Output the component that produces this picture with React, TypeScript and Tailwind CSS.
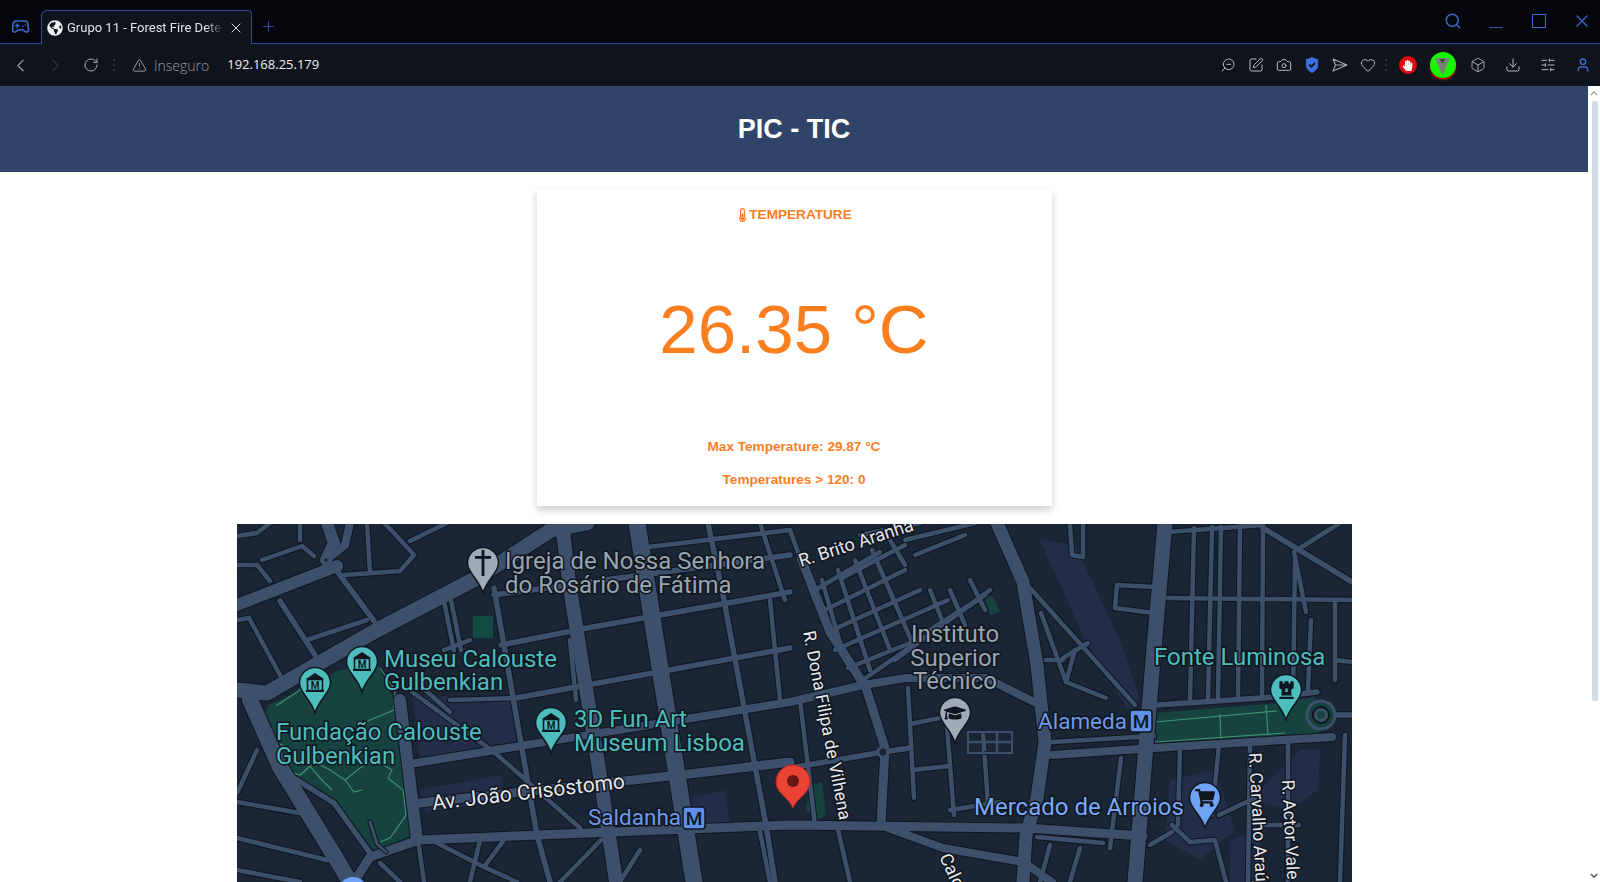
import {
  Box,
  Camera,
  ChevronLeft,
  ChevronRight,
  Download,
  Gamepad2,
  Heart,
  Plus,
  RotateCw,
  Search,
  SlidersHorizontal,
  SquarePen,
  TriangleAlert,
  User,
  X,
  ZoomOut,
} from "lucide-react";
import {
  FaChessRook,
  FaGlobeAmericas,
  FaGraduationCap,
  FaHandPaper,
  FaShoppingCart,
  FaThermometerHalf,
} from "react-icons/fa";

// [width, points] in page coordinates, the map svg has a matching viewBox
const ROADS: [number, string][] = [
  [3, "237,565 257,565"],
  [3, "257,565 270,581"],
  [3, "262,560 302,546 314,556"],
  [3, "367,523 370,573"],
  [3, "344,575 400,571 414,555 394,533 384,523"],
  [3, "410,541 447,523"],
  [3, "237,536 257,533 270,523"],
  [3, "444,601 454,651"],
  [3, "451,600 461,650"],
  [3, "249,618 280,675"],
  [3, "307,640 367,620"],
  [3, "237,620 249,618"],
  [3, "300,523 300,540"],
  [4, "337,571 374,621"],
  [4, "280,601 315,655"],
  [3, "237,802 300,813"],
  [3, "237,838 327,860"],
  [3, "237,793 257,750"],
  [3, "237,870 300,882"],
  [4, "294,778 334,803 370,853"],
  [3, "380,863 400,882"],
  [3, "419,847 424,882"],
  [3, "437,843 484,867 517,882"],
  [3, "504,840 484,867"],
  [3, "412,692 494,752 580,828"],
  [3, "425,690 450,712"],
  [4, "494,588 537,835 550,882"],
  [4, "708,523 723,595 766,825 775,882"],
  [3, "444,650 470,640"],
  [3, "570,640 576,700"],
  [3, "650,620 660,700"],
  [4, "494,595 790,555"],
  [3, "640,548 790,530"],
  [4, "501,645 587,628 790,592"],
  [4, "516,698 790,648"],
  [3, "450,700 516,698"],
  [5, "416,763 790,702"],
  [6, "420,803 698,773 790,762"],
  [3, "760,523 785,600"],
  [3, "690,830 700,882"],
  [3, "760,832 770,882"],
  [3, "800,700 815,825"],
  [3, "601,840 560,882"],
  [3, "640,850 620,882"],
  [3, "480,840 470,882"],
  [3, "770,600 780,700"],
  // R. Brito Aranha grid
  [3, "815,590 880,552"],
  [3, "825,610 905,570"],
  [3, "828,632 920,590"],
  [3, "835,650 948,600"],
  [3, "848,668 930,635"],
  [3, "860,682 985,595"],
  [3, "895,660 990,590"],
  [3, "842,578 905,545"],
  [3, "822,580 845,660"],
  [3, "838,570 870,670"],
  [3, "855,560 890,650"],
  [3, "872,550 912,642"],
  [3, "890,540 905,565"],
  [3, "930,590 946,630"],
  [3, "950,590 965,625"],
  [3, "970,580 985,610"],
  [3, "860,535 920,523"],
  [3, "905,540 975,523"],
  [3, "915,555 965,535"],
  [3, "790,530 815,600"],
  // Instituto area
  [4, "790,768 883,752 910,748"],
  [3, "908,688 914,798"],
  [3, "946,715 954,815"],
  [3, "983,732 988,805"],
  [3, "910,724 950,716"],
  [3, "912,770 950,766"],
  [3, "950,810 1000,802"],
  [3, "930,630 985,595"],
  [6, "801,558 830,632 866,688 885,748 881,825"],
  [5, "790,702 863,685 906,678 986,678 1034,702"],
  [3, "1070,525 1072,555 1083,557 1083,525"],
  [3, "1154,587 1117,585 1115,608 1154,613"],
  [3, "1030,588 1135,705"],
  [3, "1041,613 1066,682 1106,698"],
  [3, "1063,658 1088,643"],
  [3, "1046,660 1063,660"],
  [3, "1066,682 1075,650"],
  [3, "837,825 850,882"],
  [5, "888,828 943,848 1023,862 1052,882"],
  [3, "1037,837 1103,843"],
  [3, "1050,845 1040,882"],
  [3, "1080,848 1070,882"],
  [3, "1110,848 1121,758"],
  [3, "1052,742 1154,736"],
  [3, "1172,825 1190,842 1215,840 1226,882"],
  [3, "1150,845 1172,832"],
  [3, "1219,815 1255,798"],
  [3, "1263,825 1299,825"],
  [3, "1180,745 1178,825"],
  [3, "1219,745 1212,815"],
  [3, "1250,745 1248,882"],
  [3, "1288,740 1288,882"],
  [3, "1345,735 1340,882"],
  // blocks above the Alameda park
  [3, "1194,528 1190,700"],
  [3, "1212,527 1208,698"],
  [3, "1221,527 1218,698"],
  [3, "1240,526 1238,697"],
  [3, "1263,525 1262,696"],
  [3, "1295,560 1293,694"],
  [3, "1311,620 1308,690"],
  [3, "1335,600 1335,680"],
  [3, "1168,598 1352,600"],
  [3, "1168,532 1263,525"],
  [4, "1263,528 1352,582"],
  [3, "1294,552 1306,612"],
  [3, "1300,548 1340,523"],
  [3, "1335,660 1352,662"],
  [4, "1157,705 1274,697 1317,692"],
  [5, "1052,755 1154,748 1332,737"],
  [4, "1332,715 1352,715"],
  // main avenues
  [9, "326,560 334,543 327,523"],
  [5, "326,560 345,545 350,523"],
  [9, "237,605 337,566"],
  [9, "400,700 417,840"],
  [6, "354,882 370,857 419,840 537,835 790,825 1026,828 1143,836"],
  [12, "237,690 267,693 377,630 477,578 551,530 587,523"],
  [13, "250,700 280,767 337,860 350,882"],
  [11, "562,523 569,582 601,782 616,882"],
  [14, "637,523 694,882"],
  [10, "997,523 1023,582 1037,665 1045,742 1037,798 1026,835 1023,882"],
  [12, "1165,523 1154,648 1143,782 1135,882"],
];

const PARK_PATHS = [
  "264,738 282,745 291,752 283,770 300,775 310,766 320,778 332,790",
  "300,775 315,762 330,770 345,780 360,768 375,760 392,770 388,778 403,790 406,815 390,838 380,842",
  "345,780 354,792 362,790",
  "276,706 300,690 302,678 325,664",
  "380,668 395,690 394,710 370,720 360,725",
  "1155,722 1277,711",
  "1155,742 1285,733",
  "1220,714 1221,742",
  "1266,705 1268,735",
  "1055,752 1155,744",
];

// thin streets and avenues both read heavier than their traced centre lines
function roadWidth(width: number) {
  return width <= 4 ? width + 1.5 : width + 3;
}

function Road({ width, points, casing }: { width: number; points: string; casing?: boolean }) {
  return (
    <polyline
      points={points}
      fill="none"
      stroke={casing ? "#10161f" : "#3d506b"}
      strokeWidth={casing ? roadWidth(width) + 2 : roadWidth(width)}
      strokeLinecap="round"
      strokeLinejoin="round"
    />
  );
}

function Pin({ x, y, color, children }: { x: number; y: number; color: string; children?: React.ReactNode }) {
  return (
    <g transform={`translate(${x} ${y})`}>
      <path
        d="M-15.5 0A15.5 15.5 0 1 1 15.5 0C15.5 10 4 16 0 30C-4 16 -15.5 10 -15.5 0Z"
        fill={color}
        stroke="#10161f"
        strokeWidth="1.5"
      />
      {children}
    </g>
  );
}

function Museum() {
  return (
    <g>
      <polygon points="-9,-4 0,-10 9,-4" fill="#10161f" />
      <rect x="-7.5" y="-3.5" width="15" height="11" fill="none" stroke="#10161f" strokeWidth="1.6" />
      <rect x="-9" y="7" width="18" height="2" fill="#10161f" />
      <text x="0" y="5.5" textAnchor="middle" fontSize="10" fontWeight="700" fontFamily="Roboto, sans-serif" fill="#10161f">
        M
      </text>
    </g>
  );
}

function MetroBadge({ x, y }: { x: number; y: number }) {
  return (
    <g>
      <rect x={x} y={y} width="22" height="22" rx="3" fill="#5f8fe8" stroke="#10161f" strokeWidth="1.5" />
      <text x={x + 11} y={y + 18} textAnchor="middle" fontSize="19" fontWeight="500" fill="#10161f">
        M
      </text>
    </g>
  );
}

function Label({
  x,
  y,
  color,
  size = 24,
  anchor,
  rotate,
  children,
}: {
  x: number;
  y: number;
  color: string;
  size?: number;
  anchor?: "middle";
  rotate?: number;
  children: React.ReactNode;
}) {
  return (
    <text
      x={x}
      y={y}
      fill={color}
      fontSize={size}
      textAnchor={anchor}
      stroke="#10161f"
      strokeWidth="3"
      paintOrder="stroke"
      transform={rotate ? `rotate(${rotate} ${x} ${y})` : undefined}
    >
      {children}
    </text>
  );
}

function MapView() {
  const teal = "#4dbdbd";
  const grey = "#98a5b0";
  const blue = "#6f9bea";
  return (
    <svg viewBox="237 524 1115 359" className="block h-full w-full" fontFamily="Roboto, sans-serif">
      <rect x="237" y="523" width="1115" height="360" fill="#1a2536" />

      {/* built-up zones, slightly lighter than the blocks */}
      <g fill="#222d47">
        <polygon points="412,695 520,700 517,745 420,762" />
        <polygon points="1040,540 1075,545 1120,640 1140,700 1130,712 1085,640" />
        <polygon points="420,790 500,775 505,800 425,812" />
        <polygon points="680,800 725,790 730,825 690,828" />
        <polygon points="1170,780 1215,770 1235,830 1200,860 1165,840" />
        <polygon points="1250,800 1300,750 1320,750 1318,790 1290,810" />
        <polygon points="1230,840 1260,830 1265,882 1230,882" />
      </g>

      {/* parks */}
      <g fill="#16423f">
        <polygon points="262,720 269,705 280,700 337,671 377,663 394,700 412,835 375,852 334,800 295,777" />
        <polygon points="1155,713 1277,703 1314,697 1332,715 1317,735 1155,745" />
        <rect x="473" y="616" width="20" height="22" fill="#134a42" />
        <polygon points="983,590 995,600 1000,612 990,615" />
        <polygon points="810,786 822,782 826,815 815,822 806,808" />
      </g>
      <g fill="none" stroke="#3f8f70" strokeWidth="1.2">
        {PARK_PATHS.map((p) => (
          <polyline key={p} points={p} />
        ))}
      </g>

      {/* roads, the dark casing goes under all of the fills */}
      {ROADS.map(([w, p]) => (
        <Road key={`c${p}`} width={w} points={p} casing />
      ))}
      {ROADS.map(([w, p]) => (
        <Road key={p} width={w} points={p} />
      ))}

      <polyline points="370,822 377,844 386,852" fill="none" stroke="#10161f" strokeWidth="5" strokeLinecap="round" />
      <polyline points="370,822 377,844 386,852" fill="none" stroke="#3d506b" strokeWidth="3" strokeLinecap="round" />
      <circle cx="883" cy="752" r="5" fill="#1a2536" stroke="#3d506b" strokeWidth="3" />
      <circle cx="326" cy="560" r="1.5" fill="#10161f" />
      <circle cx="1321" cy="715" r="14" fill="#16423f" stroke="#3d506b" strokeWidth="3" />
      <circle cx="1321" cy="715" r="8" fill="#3d506b" stroke="#10161f" strokeWidth="2" />
      <circle cx="1321" cy="715" r="4" fill="#16423f" />
      <g fill="none" stroke="#3d506b" strokeWidth="2.5">
        <rect x="968" y="732" width="44" height="21" stroke="#10161f" strokeWidth="4" />
        <rect x="968" y="732" width="44" height="21" />
        <path d="M968 742H1012M983 732V753M997 732V753" />
      </g>

      <Label x={505} y={569} color={grey}>Igreja de Nossa Senhora</Label>
      <Label x={505} y={593} color={grey}>do Rosário de Fátima</Label>
      <Label x={384} y={667} color={teal}>Museu Calouste</Label>
      <Label x={384} y={690} color={teal}>Gulbenkian</Label>
      <Label x={276} y={740} color={teal}>Fundação Calouste</Label>
      <Label x={276} y={764} color={teal}>Gulbenkian</Label>
      <Label x={574} y={727} color={teal}>3D Fun Art</Label>
      <Label x={574} y={751} color={teal}>Museum Lisboa</Label>
      <Label x={433} y={810} color="#e6e8ec" size={21} rotate={-6.5}>Av. João Crisóstomo</Label>
      <Label x={588} y={825} color={blue} size={22.5}>Saldanha</Label>
      <Label x={801} y={567} color="#e6e8ec" size={18} rotate={-18}>R. Brito Aranha</Label>
      <Label x={803} y={632} color="#e6e8ec" size={17.5} rotate={79}>R. Dona Filipa de Vilhena</Label>
      <Label x={955} y={642} color={grey} anchor="middle">Instituto</Label>
      <Label x={955} y={666} color={grey} anchor="middle">Superior</Label>
      <Label x={955} y={689} color={grey} anchor="middle">Técnico</Label>
      <Label x={1038} y={729} color={blue} size={22.5}>Alameda</Label>
      <Label x={1154} y={665} color={teal}>Fonte Luminosa</Label>
      <Label x={974} y={815} color="#7aa9f7">Mercado de Arroios</Label>
      <Label x={939} y={857} color="#e6e8ec" size={18} rotate={65}>Calçada</Label>
      <Label x={1249} y={753} color="#e6e8ec" size={17.5} rotate={87}>R. Carvalho Araújo</Label>
      <Label x={1282} y={780} color="#e6e8ec" size={17.5} rotate={87}>R. Actor Vale</Label>

      <MetroBadge x={683} y={807} />
      <MetroBadge x={1130} y={710} />

      <Pin x={483} y={563} color="#9fabb5">
        <rect x="-1.4" y="-13" width="2.8" height="26" fill="#10161f" />
        <rect x="-8" y="-7" width="16" height="2.8" fill="#10161f" />
      </Pin>
      <Pin x={362} y={662} color={teal}>
        <Museum />
      </Pin>
      <Pin x={315} y={683} color={teal}>
        <Museum />
      </Pin>
      <Pin x={551} y={723} color={teal}>
        <Museum />
      </Pin>
      <Pin x={955} y={713} color="#9fabb5">
        <FaGraduationCap x={-11} y={-11} size={22} color="#10161f" />
      </Pin>
      <Pin x={1205} y={798} color="#6ea2f5">
        <FaShoppingCart x={-10} y={-10} size={20} color="#10161f" />
      </Pin>
      <Pin x={1286} y={690} color={teal}>
        <FaChessRook x={-9} y={-10} size={19} color="#10161f" />
      </Pin>
      <g transform="translate(793 783)">
        <path
          d="M-17 0A17 17 0 1 1 17 0C17 11 4 16 0 26C-4 16 -17 11 -17 0Z"
          transform="translate(0 -1)"
          fill="#ea4335"
          stroke="#b3261e"
          strokeWidth="1"
        />
        <circle cx="0" cy="-2" r="6" fill="#661510" />
      </g>
      <circle cx="353" cy="892" r="15" fill="#6ea2f5" />
    </svg>
  );
}

function Slot({ w, children }: { w: string; children: React.ReactNode }) {
  return <div className={`flex shrink-0 items-center justify-center ${w}`}>{children}</div>;
}

const toolIcon = "h-[16px] w-[16px] text-[#b4bac4]";

function Dots() {
  return (
    <div className="flex flex-col gap-[3px]">
      <span className="h-[2px] w-[2px] bg-[#2e343e]" />
      <span className="h-[2px] w-[2px] bg-[#2e343e]" />
      <span className="h-[2px] w-[2px] bg-[#2e343e]" />
    </div>
  );
}

function BrowserChrome() {
  return (
    <div className="shrink-0 font-['Open_Sans',sans-serif]">
      <div className="flex h-[44px] items-end border-b border-[#2c4a94] bg-[#05070c]">
        <div className="flex h-[33px] w-[41px] items-center justify-center">
          <Gamepad2 className="h-[19px] w-[19px] text-[#3f68c8]" />
        </div>
        <div className="-mb-px flex h-[34px] w-[211px] items-center rounded-tl-md rounded-tr-sm border border-b-0 border-[#2c4a94] bg-[#0e131c] pl-[5px]">
          <span className="flex h-[16px] w-[16px] items-center justify-center rounded-full bg-[#0e131c]">
            <FaGlobeAmericas className="h-[16px] w-[16px] text-[#eef0f3]" />
          </span>
          <span className="ml-[4px] w-[157px] overflow-hidden whitespace-nowrap font-['Roboto',sans-serif] text-[13px] text-[#dfe2e7] [mask-image:linear-gradient(to_right,black_88%,transparent)]">
            Grupo 11 - Forest Fire Detection
          </span>
          <X className="ml-[4px] h-[16px] w-[16px] text-[#d5d8de]" strokeWidth={1.5} />
        </div>
        <div className="flex h-[33px] w-[32px] items-center justify-center">
          <Plus className="h-[17px] w-[17px] text-[#2f4f9e]" strokeWidth={1.5} />
        </div>
        <div className="flex-1" />
        <div className="flex h-[43px] items-center pb-[2px] text-[#3f68c8]">
          <Slot w="w-[50px]">
            <Search className="h-[18px] w-[18px]" strokeWidth={2} />
          </Slot>
          <Slot w="w-[36px]">
            <span className="mt-[14px] h-[1.5px] w-[14px] bg-[#3256a8]" />
          </Slot>
          <Slot w="w-[50px]">
            <span className="h-[14px] w-[14px] border-[1.5px] border-[#3f68c8]" />
          </Slot>
          <Slot w="w-[36px]">
            <X className="h-[20px] w-[20px]" strokeWidth={1.5} />
          </Slot>
        </div>
      </div>
      <div className="flex h-[42px] items-center bg-[#0e131c]">
        <Slot w="ml-[3px] w-[35px]">
          <ChevronLeft className="h-[21px] w-[21px] text-[#8c929c]" strokeWidth={1.5} />
        </Slot>
        <Slot w="w-[35px]">
          <ChevronRight className="h-[21px] w-[21px] text-[#30353e]" strokeWidth={1.5} />
        </Slot>
        <Slot w="w-[35px]">
          <RotateCw className="h-[16px] w-[16px] text-[#a4a9b2]" strokeWidth={1.5} />
        </Slot>
        <Slot w="ml-[2px] w-[8px]">
          <Dots />
        </Slot>
        <TriangleAlert className="ml-[14px] h-[15px] w-[15px] text-[#a4a9b2]" strokeWidth={1.5} />
        <span className="ml-[7px] text-[14px] font-light text-[#9298a2]">Inseguro</span>
        <span className="ml-[18px] text-[13px] font-medium text-[#eceef1]">192.168.25.179</span>
        <div className="flex-1" />
        <Slot w="w-[28px]">
          <ZoomOut className={`${toolIcon} -scale-x-100`} strokeWidth={1.5} />
        </Slot>
        <Slot w="w-[28px]">
          <SquarePen className={toolIcon} strokeWidth={1.5} />
        </Slot>
        <Slot w="w-[28px]">
          <Camera className={toolIcon} strokeWidth={1.5} />
        </Slot>
        <Slot w="w-[28px]">
          <svg viewBox="0 0 16 18" className="h-[16px] w-[14px]">
            <path d="M8 0L15 2.5V9C15 13 12 16 8 18C4 16 1 13 1 9V2.5Z" fill="#3f6fe0" />
            <path d="M4.5 8.5L7.2 11L11.5 6.5" fill="none" stroke="#0e131c" strokeWidth="2" />
          </svg>
        </Slot>
        <Slot w="w-[28px]">
          <svg viewBox="0 0 16 14" className="h-[14px] w-[16px]">
            <path d="M1 1L15 7L1 13L3.5 7ZM3.5 7H15" fill="none" stroke="#a4a9b2" strokeWidth="1.1" strokeLinejoin="round" />
          </svg>
        </Slot>
        <Slot w="w-[28px]">
          <Heart className={toolIcon} strokeWidth={1.5} />
        </Slot>
        <Slot w="w-[8px]">
          <Dots />
        </Slot>
        <Slot w="w-[35px]">
          <span className="flex h-[18px] w-[18px] items-center justify-center rounded-full bg-[#e30613]">
            <FaHandPaper className="h-[11px] w-[11px] text-white" />
          </span>
        </Slot>
        <Slot w="w-[35px]">
          <span className="flex h-[26px] w-[26px] items-center justify-center rounded-full bg-[#19f400] shadow-[0_2px_2px_#b5120c]">
            <svg viewBox="0 0 16 20" className="mt-[3px] h-[19px] w-[15px]">
              <polygon points="0,1 16,1 8,19" fill="#7a7f78" />
              <polygon points="5,2 11,2 8,7" fill="#3d423d" />
            </svg>
          </span>
        </Slot>
        <Slot w="w-[35px]">
          <Box className={toolIcon} strokeWidth={1.3} />
        </Slot>
        <Slot w="w-[35px]">
          <Download className={toolIcon} strokeWidth={1.5} />
        </Slot>
        <Slot w="w-[35px]">
          <SlidersHorizontal className={toolIcon} strokeWidth={1.5} />
        </Slot>
        <Slot w="w-[35px]">
          <User className="h-[16px] w-[16px] text-[#3f68c8]" strokeWidth={2} />
        </Slot>
      </div>
    </div>
  );
}

export default function App() {
  return (
    <div className="flex h-screen flex-col overflow-hidden bg-white">
      <BrowserChrome />
      <div className="flex min-h-0 flex-1">
        <main className="min-w-0 flex-1 overflow-hidden font-['Liberation_Sans',Arial,sans-serif]">
          <header className="flex h-[86px] items-center justify-center bg-[#2f4468]">
            <h1 className="text-[27px] font-bold text-white">PIC - TIC</h1>
          </header>
          <section className="mx-auto mt-[17px] flex h-[317px] w-[515px] flex-col items-center bg-white pb-[16px] pt-[16px] text-[#fd7e1f] shadow-[0_4px_8px_rgba(0,0,0,0.2)]">
            <h2 className="flex items-center text-[13.6px] font-bold leading-5">
              <FaThermometerHalf className="h-[14px] w-[13px]" />
              TEMPERATURE
            </h2>
            <div className="flex flex-1 items-center pb-[3px] text-[69px] leading-none">26.35 °C</div>
            <p className="text-[13.6px] font-bold leading-5">Max Temperature: 29.87 °C</p>
            <p className="mt-[13px] text-[13.6px] font-bold leading-5">Temperatures &gt; 120: 0</p>
          </section>
          <div className="mx-auto mt-[18px] h-[359px] w-[1115px]">
            <MapView />
          </div>
        </main>
        <div className="relative flex w-[12px] shrink-0 flex-col items-center bg-white">
          <svg viewBox="0 0 10 6" className="mt-[5px] h-[5px] w-[8px] shrink-0">
            <path d="M1 5L5 1L9 5" fill="none" stroke="#9a9a9a" strokeWidth="1.6" />
          </svg>
          <div className="ml-[2px] mt-[5px] h-[600px] w-[6px] rounded-[2px] bg-[#cfdbe6]" />
          <div className="flex-1" />
          <svg viewBox="0 0 10 6" className="mb-[4px] h-[5px] w-[8px] shrink-0">
            <path d="M1 1L5 5L9 1" fill="none" stroke="#555" strokeWidth="1.8" />
          </svg>
        </div>
      </div>
    </div>
  );
}
